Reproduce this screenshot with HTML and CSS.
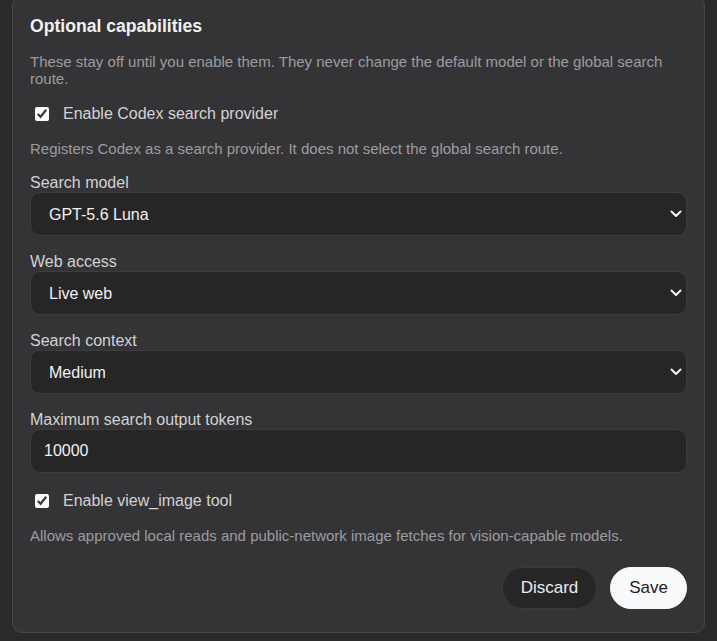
FILE: index.html
```html
<!DOCTYPE html>
<html lang="en">
<head>
    <meta charset="UTF-8">
    <meta name="viewport" content="width=device-width, initial-scale=1.0">
    <title>Optional capabilities</title>
    <link rel="stylesheet" href="styles.css">
</head>
<body>

    <section class="panel">
        <h3 class="panel-title">Optional capabilities</h3>
        <p class="hint intro">These stay off until you enable them. They never change the default model or the global search route.</p>

        <label class="check-row">
            <input type="checkbox" checked>
            <span>Enable Codex search provider</span>
        </label>
        <p class="hint">Registers Codex as a search provider. It does not select the global search route.</p>

        <div class="field">
            <label for="search-model">Search model</label>
            <div class="select-wrap">
                <select id="search-model">
                    <option>GPT-5.6 Luna</option>
                </select>
                <svg class="chevron" viewBox="0 0 12 8" width="12" height="8"><path d="M1.5 1.5 6 6l4.5-4.5" fill="none" stroke="currentColor" stroke-width="2" stroke-linecap="round" stroke-linejoin="round"/></svg>
            </div>
        </div>

        <div class="field">
            <label for="web-access">Web access</label>
            <div class="select-wrap">
                <select id="web-access">
                    <option>Live web</option>
                </select>
                <svg class="chevron" viewBox="0 0 12 8" width="12" height="8"><path d="M1.5 1.5 6 6l4.5-4.5" fill="none" stroke="currentColor" stroke-width="2" stroke-linecap="round" stroke-linejoin="round"/></svg>
            </div>
        </div>

        <div class="field">
            <label for="search-context">Search context</label>
            <div class="select-wrap">
                <select id="search-context">
                    <option>Medium</option>
                </select>
                <svg class="chevron" viewBox="0 0 12 8" width="12" height="8"><path d="M1.5 1.5 6 6l4.5-4.5" fill="none" stroke="currentColor" stroke-width="2" stroke-linecap="round" stroke-linejoin="round"/></svg>
            </div>
        </div>

        <div class="field">
            <label for="max-tokens">Maximum search output tokens</label>
            <input id="max-tokens" class="text-input" type="text" value="10000">
        </div>

        <label class="check-row late">
            <input type="checkbox" checked>
            <span>Enable view_image tool</span>
        </label>
        <p class="hint">Allows approved local reads and public-network image fetches for vision-capable models.</p>

        <div class="actions">
            <button class="btn btn-ghost">Discard</button>
            <button class="btn btn-primary">Save</button>
        </div>
    </section>

</body>
</html>
```

FILE: styles.css
```css
:root {
    --page: #2a2a2b;
    --panel: #343436;
    --panel-line: #47474a;
    --field: #262626;
    --field-line: #3d3d3f;
    --text: #f1f1f1;
    --label: #d2d2d4;
    --muted: #9c9ca0;
    --light: #f8f9fa;
}

html, body {
    background: var(--page);
}

body {
    font-family: 'Liberation Sans', Arial, sans-serif;
    margin: 0;
    padding: 0 12px 9px;
    color: var(--text);
}

.panel {
    display: flex;
    flex-direction: column;
    gap: 16px;
    margin-top: -4px;
    padding: 18px 17px 23px;
    background: var(--panel);
    border: 1px solid var(--panel-line);
    border-radius: 10px;
}

.panel-title {
    margin: 1px 0 -1px;
    font-size: 17.6px;
    line-height: 21px;
    font-weight: 700;
    color: var(--text);
}

.hint {
    margin: 0;
    font-size: 15px;
    line-height: 17px;
    color: var(--muted);
}

.hint.intro {
    margin-top: 1px;
}

.check-row {
    display: flex;
    align-items: center;
    gap: 14px;
    height: 20px;
    margin-top: 1px;
    font-size: 16px;
    color: var(--label);
}

.check-row.late {
    margin-top: 2px;
}

.check-row input {
    width: 14px;
    height: 14px;
    margin: 0 0 0 5px;
    accent-color: var(--light);
}

.field {
    display: flex;
    flex-direction: column;
}

.field label {
    font-size: 16px;
    line-height: 19px;
    color: var(--label);
}

.select-wrap {
    position: relative;
}

select, .text-input {
    width: 100%;
    height: 44px;
    box-sizing: border-box;
    background: var(--field);
    border: 1px solid var(--field-line);
    border-radius: 10px;
    color: var(--text);
    font-family: inherit;
    font-size: 16px;
    outline: none;
}

select {
    appearance: none;
    padding: 0 32px 0 18px;
}

.text-input {
    padding: 0 13px;
}

.chevron {
    position: absolute;
    right: 5px;
    top: 18px;
    color: #f4f4f4;
    pointer-events: none;
}

.actions {
    display: flex;
    justify-content: flex-end;
    gap: 13px;
    margin-top: 7px;
}

.btn {
    font-family: inherit;
    font-size: 17px;
    line-height: 20px;
    padding: 10px 18px;
    border-radius: 999px;
    cursor: pointer;
}

.btn-ghost {
    background: #262626;
    border: 1px solid #3a3a3c;
    color: #ececec;
}

.btn-primary {
    background: var(--light);
    border: 1px solid var(--light);
    color: #202124;
}
```
